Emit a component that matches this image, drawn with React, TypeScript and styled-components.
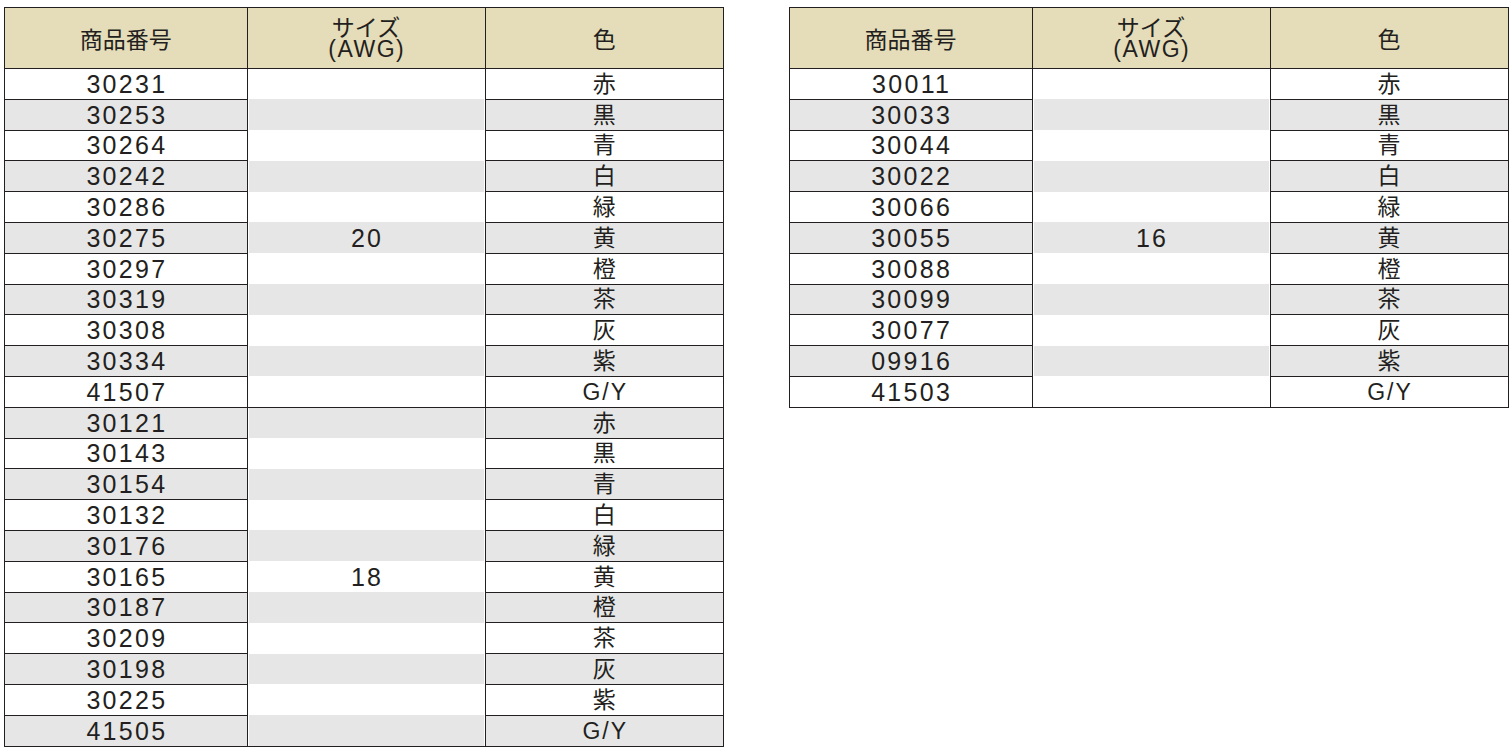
import styled, { createGlobalStyle } from "styled-components";

const GlobalStyle = createGlobalStyle`
  html, body {
    margin: 0;
    padding: 0;
    background: #fff;
  }
  body {
    font-family: "Liberation Sans", "Noto Sans CJK JP", sans-serif;
    color: #231f20;
  }
`;

const LINE = "#231f20";
const HEAD_BG = "#e5dcb9";
const STRIPE = "#e6e6e6";

const Page = styled.div`
  display: flex;
  align-items: flex-start;
  gap: 64.5px;
  padding: 7px 0 0 4px;
`;

const Table = styled.table`
  width: 720px;
  border-collapse: collapse;
  table-layout: fixed;
  border: 1px solid ${LINE};
`;

const HeadCell = styled.th`
  height: 60px;
  padding: 0;
  background: ${HEAD_BG};
  border: 1px solid ${LINE};
  font-family: "Noto Sans CJK JP", sans-serif;
  font-weight: 400;
  font-size: 23px;
  line-height: 23px;
  text-align: center;
  vertical-align: middle;
`;

const HeadLine = styled.span<{ $latin?: boolean }>`
  display: block;
  height: 23px;
  line-height: 23px;
  font-family: ${(p) => (p.$latin ? `"Liberation Sans", sans-serif` : `"Noto Sans CJK JP", sans-serif`)};
  letter-spacing: ${(p) => (p.$latin ? "1.5px" : "0")};
  text-indent: ${(p) => (p.$latin ? "1.5px" : "0")};
`;

const Row = styled.tr<{ $striped: boolean }>`
  height: 30.8px;
  background: ${(p) => (p.$striped ? STRIPE : "#fff")};
`;

const Cell = styled.td`
  padding: 0;
  border: 1px solid ${LINE};
  text-align: center;
  vertical-align: middle;
  font-size: 24px;
  line-height: 26px;
  letter-spacing: 2px;
  text-indent: 2px;
`;

const ColorCell = styled(Cell)`
  font-size: 23px;
`;

const NumCell = styled(Cell)`
  font-size: 25px;
  letter-spacing: 2.3px;
  text-indent: 2.3px;
`;

const SizeCell = styled(Cell)<{ $groupStart: boolean; $groupEnd: boolean }>`
  font-size: 25px;
  border-top: ${(p) => (p.$groupStart ? `1px solid ${LINE}` : "none")};
  border-bottom: ${(p) => (p.$groupEnd ? `1px solid ${LINE}` : "none")};
  box-shadow: inset 1px 0 #fff, inset -1px 0 #fff;
`;

const COLORS = ["赤", "黒", "青", "白", "緑", "黄", "橙", "茶", "灰", "紫", "G/Y"];

type Group = { size: string; codes: string[] };

const leftGroups: Group[] = [
  {
    size: "20",
    codes: ["30231", "30253", "30264", "30242", "30286", "30275", "30297", "30319", "30308", "30334", "41507"],
  },
  {
    size: "18",
    codes: ["30121", "30143", "30154", "30132", "30176", "30165", "30187", "30209", "30198", "30225", "41505"],
  },
];

const rightGroups: Group[] = [
  {
    size: "16",
    codes: ["30011", "30033", "30044", "30022", "30066", "30055", "30088", "30099", "30077", "09916", "41503"],
  },
];

function WireTable({ groups, firstCol }: { groups: Group[]; firstCol: number }) {
  let index = 0;
  return (
    <Table>
      <colgroup>
        <col style={{ width: firstCol }} />
        <col style={{ width: 238 }} />
        <col />
      </colgroup>
      <thead>
        <tr>
          <HeadCell>商品番号</HeadCell>
          <HeadCell>
            <HeadLine>サイズ</HeadLine>
            <HeadLine $latin>(AWG)</HeadLine>
          </HeadCell>
          <HeadCell>色</HeadCell>
        </tr>
      </thead>
      <tbody>
        {groups.map((g) =>
          g.codes.map((code, i) => {
            const striped = index % 2 === 1;
            index++;
            const mid = Math.floor(g.codes.length / 2);
            return (
              <Row key={code} $striped={striped}>
                <NumCell>{code}</NumCell>
                <SizeCell $groupStart={i === 0} $groupEnd={i === g.codes.length - 1}>
                  {i === mid ? g.size : ""}
                </SizeCell>
                <ColorCell>{COLORS[i]}</ColorCell>
              </Row>
            );
          })
        )}
      </tbody>
    </Table>
  );
}

export default function App() {
  return (
    <>
      <GlobalStyle />
      <Page>
        <WireTable groups={leftGroups} firstCol={242.5} />
        <WireTable groups={rightGroups} firstCol={243} />
      </Page>
    </>
  );
}
